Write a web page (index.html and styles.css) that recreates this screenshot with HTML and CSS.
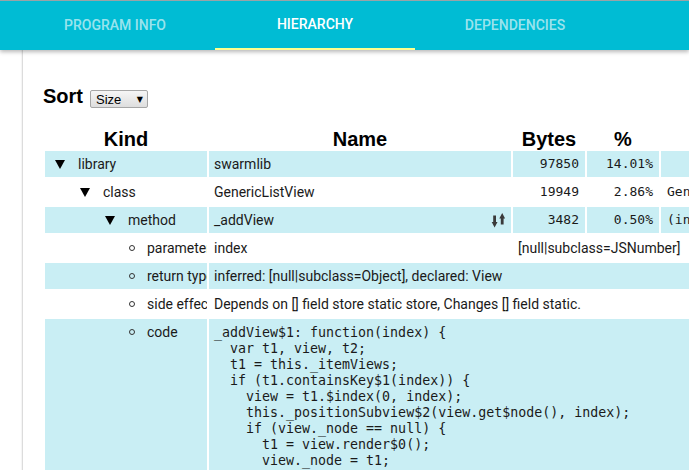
FILE: index.html
```html
<!DOCTYPE html>
<html lang="en">
<head>
<meta charset="utf-8">
<title>Dump Info Viewer</title>
<link rel="stylesheet" href="styles.css">
</head>
<body>
<header class="appbar">
  <nav class="tabs">
    <div class="tab">Program Info</div>
    <div class="tab tab-active">Hierarchy</div>
    <div class="tab">Dependencies</div>
  </nav>
</header>
<main class="card">
  <div class="sortbar">
    <h2 class="sort-title">Sort</h2>
    <label class="select">
      <span class="select-value">Size</span>
      <span class="select-caret">&#9660;</span>
    </label>
  </div>
  <table class="tree">
    <colgroup>
      <col class="c-kind"><col class="c-name"><col class="c-bytes"><col class="c-pct"><col class="c-extra">
    </colgroup>
    <thead>
      <tr><th>Kind</th><th>Name</th><th>Bytes</th><th>%</th><th></th></tr>
    </thead>
    <tbody>
      <tr class="hl">
        <td class="kind"><span class="k k0"><svg class="tri" viewBox="0 0 10 9"><polygon points="0,0 10,0 5,9"/></svg><span>library</span></span></td>
        <td class="name">swarmlib</td>
        <td class="num">97850</td>
        <td class="num">14.01%</td>
        <td class="mono"></td>
      </tr>
      <tr>
        <td class="kind"><span class="k k1"><svg class="tri" viewBox="0 0 10 9"><polygon points="0,0 10,0 5,9"/></svg><span>class</span></span></td>
        <td class="name">GenericListView</td>
        <td class="num">19949</td>
        <td class="num">2.86%</td>
        <td class="mono">GenericListView</td>
      </tr>
      <tr class="hl">
        <td class="kind"><span class="k k2"><svg class="tri" viewBox="0 0 10 9"><polygon points="0,0 10,0 5,9"/></svg><span>method</span></span></td>
        <td class="name"><div class="name-row"><span>_addView</span><svg class="sorticon" viewBox="0 0 14 14"><rect x="1.2" y="2.5" width="2.8" height="7"/><polygon points="-0.3,9 5.5,9 2.6,14.5"/><rect x="8.8" y="4.5" width="2.8" height="7"/><polygon points="7.3,5.5 13.1,5.5 10.2,0"/></svg></div></td>
        <td class="num">3482</td>
        <td class="num">0.50%</td>
        <td class="mono">(index) =&gt; View</td>
      </tr>
      <tr>
        <td class="kind"><span class="k k3"><span class="circ"></span><span>parameter</span></span></td>
        <td class="name">index</td>
        <td class="name" colspan="3">[null|subclass=JSNumber]</td>
      </tr>
      <tr class="hl">
        <td class="kind"><span class="k k3"><span class="circ"></span><span>return type</span></span></td>
        <td class="name" colspan="4">inferred: [null|subclass=Object], declared: View</td>
      </tr>
      <tr>
        <td class="kind"><span class="k k3"><span class="circ"></span><span>side effects</span></span></td>
        <td class="name" colspan="4">Depends on [] field store static store, Changes [] field static.</td>
      </tr>
      <tr class="hl">
        <td class="kind"><span class="k k3"><span class="circ"></span><span>code</span></span></td>
        <td class="code" colspan="4"><pre>_addView$1: function(index) {
  var t1, view, t2;
  t1 = this._itemViews;
  if (t1.containsKey$1(index)) {
    view = t1.$index(0, index);
    this._positionSubview$2(view.get$node(), index);
    if (view._node == null) {
      t1 = view.render$0();
      view._node = t1;
    }
    return view;
  }
}</pre></td>
      </tr>
    </tbody>
  </table>
</main>
</body>
</html>
```
FILE: styles.css
```css
html, body {
  margin: 0;
  padding: 0;
  overflow: hidden;
  background: #fff;
}
body {
  font-family: Roboto, "Liberation Sans", sans-serif;
  color: #212121;
  width: 689px;
  height: 470px;
}

.appbar {
  position: relative;
  z-index: 2;
  height: 49px;
  border-top: 1px solid #9aa3a6;
  background: #00bcd4;
  box-shadow: 0 2px 4px rgba(0, 0, 0, 0.28);
}
.tabs {
  display: flex;
  padding-left: 15px;
  height: 100%;
}
.tab {
  width: 200px;
  box-sizing: border-box;
  text-align: center;
  line-height: 49px;
  font-size: 14px;
  font-weight: 500;
  text-transform: uppercase;
  color: rgba(255, 255, 255, 0.62);
}
.tab-active {
  color: #fff;
  border-bottom: 2px solid #ffff8d;
  line-height: 47px;
}

.card {
  margin-left: 22px;
  border-left: 1px solid #dcdcdc;
  box-shadow: -1px 0 1px rgba(0, 0, 0, 0.04);
  padding: 34px 0 0 20px;
  height: 500px;
}

.sortbar {
  display: flex;
  align-items: flex-end;
  gap: 7px;
  height: 24px;
}
.sort-title {
  margin: 0;
  font-family: "Liberation Sans", Arial, sans-serif;
  font-size: 20px;
  font-weight: bold;
  line-height: 24px;
  color: #000;
}
.select {
  display: flex;
  align-items: center;
  justify-content: space-between;
  box-sizing: border-box;
  width: 58px;
  height: 18px;
  padding: 0 4px 0 5px;
  border: 1px solid #a6a6a6;
  border-radius: 2px;
  background: linear-gradient(#f6f6f6, #dedede);
  font-family: "Liberation Sans", Arial, sans-serif;
  font-size: 13px;
  color: #000;
}
.select-caret {
  font-size: 8px;
  font-family: "DejaVu Sans", sans-serif;
}

.tree {
  margin-top: 12px;
  border-spacing: 2px;
  table-layout: fixed;
  width: 840px;
}
.c-kind { width: 162px; }
.c-name { width: 302px; }
.c-bytes { width: 72px; }
.c-pct { width: 72px; }
.c-extra { width: 220px; }

.tree th {
  font-family: "Liberation Sans", Arial, sans-serif;
  font-size: 20px;
  font-weight: bold;
  line-height: 19px;
  padding: 8px 0 0;
  color: #000;
  text-align: center;
}
.tree td {
  padding: 0;
  height: 26px;
  line-height: 26px;
  font-size: 14px;
  vertical-align: top;
  white-space: nowrap;
  overflow: hidden;
  color: #1a1a1a;
}
.tree tr.hl td {
  background: #c9eef4;
}

.kind .k {
  display: flex;
  align-items: center;
  height: 26px;
}
.k0 { padding-left: 10px; }
.k1 { padding-left: 35px; }
.k2 { padding-left: 60px; }
.k3 { padding-left: 84px; }
.tri {
  width: 10px;
  height: 9px;
  margin-right: 13px;
  fill: #000;
  flex: none;
}
.circ {
  width: 4px;
  height: 4px;
  border: 1px solid #333;
  border-radius: 50%;
  margin-right: 12px;
  flex: none;
}

.tree td.name {
  padding-left: 5px;
}
.name-row {
  display: flex;
  align-items: center;
  justify-content: space-between;
  height: 26px;
  padding-right: 5px;
}
.sorticon {
  width: 14px;
  height: 14px;
  fill: #3a3a3a;
  overflow: visible;
}
.tree td.num {
  text-align: right;
  padding-right: 6px;
  font-family: "DejaVu Sans Mono", monospace;
  font-size: 13px;
}
.tree td.mono {
  padding-left: 6px;
  font-family: "DejaVu Sans Mono", monospace;
  font-size: 13px;
}
.tree td.code {
  padding: 6px 0 0 5px;
  line-height: 16px;
}
.code pre {
  margin: 0;
  font-family: "DejaVu Sans Mono", monospace;
  font-size: 13.3px;
  line-height: 16px;
  color: #1a1a1a;
}
```
